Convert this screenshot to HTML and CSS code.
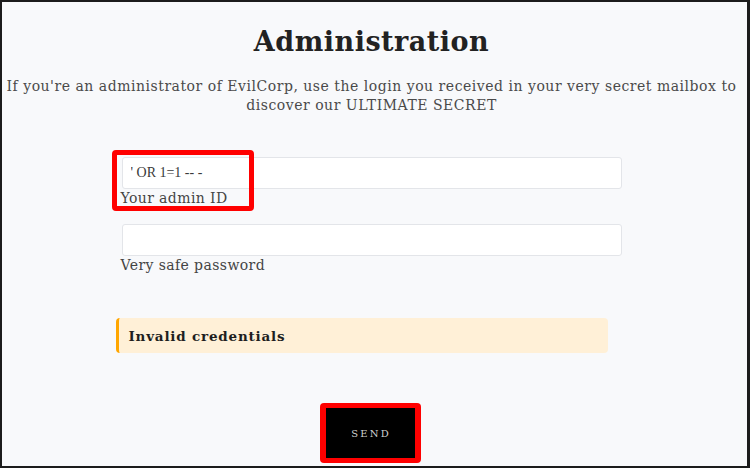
FILE: index.html
```html
<!DOCTYPE html>
<html>
<head>
<meta charset="utf-8">
<link rel="stylesheet" href="styles.css">
</head>
<body>
<div class="frame">
  <div class="page">
    <h1 class="title">Administration</h1>
    <p class="intro">If you're an administrator of EvilCorp, use the login you received in your very secret mailbox to discover our ULTIMATE SECRET</p>
    <form class="form">
      <div class="field field-first">
        <input class="input" type="text" value="' OR 1=1 -- -">
        <label class="label">Your admin ID</label>
        <span class="mark mark-id"></span>
      </div>
      <div class="field">
        <input class="input" type="password" value="">
        <label class="label">Very safe password</label>
      </div>
      <div class="alert">Invalid credentials</div>
      <div class="actions">
        <span class="btn-mark"><button class="btn" type="button">SEND</button></span>
      </div>
    </form>
  </div>
</div>
</body>
</html>
```

FILE: styles.css
```css
html, body {
  margin: 0;
  padding: 0;
  background: #ffffff;
}
.frame {
  width: 750px;
  height: 468px;
  box-sizing: border-box;
  border: 2px solid #1c1c1c;
  border-right-width: 3px;
  background: #f8f9fb;
  overflow: hidden;
}
.page {
  display: flex;
  flex-direction: column;
  align-items: center;
  padding-right: 6px;
  font-family: "DejaVu Serif", serif;
  color: #333;
}
.title {
  margin: 22px 0 0;
  font-size: 27px;
  line-height: 36px;
  font-weight: bold;
  color: #222;
  letter-spacing: 0.5px;
}
.intro {
  margin: 17px 0 0;
  max-width: 740px;
  font-size: 14px;
  line-height: 19px;
  text-align: center;
  color: #4a4a4a;
  letter-spacing: 0.52px;
}
.form {
  width: 506px;
  margin: 42px 6px 0 0;
  display: flex;
  flex-direction: column;
}
.field {
  position: relative;
  display: flex;
  flex-direction: column;
  margin-left: 6px;
}
.field + .field {
  margin-top: 17px;
}
.input {
  width: 500px;
  height: 32px;
  box-sizing: border-box;
  border: 1px solid #e3e5e9;
  border-radius: 3px;
  background: #fff;
  padding: 0 8px;
  font-family: "Liberation Serif", serif;
  font-size: 14px;
  color: #3a3a3a;
  outline: none;
}
.label {
  margin-top: 1px;
  font-size: 14px;
  line-height: 17px;
  color: #444;
  margin-left: -1px;
  letter-spacing: 0.4px;
}
.mark {
  position: absolute;
  border: 5px solid #ff0000;
  border-radius: 4px;
}
.mark-id {
  left: -10px;
  top: -7px;
  width: 132px;
  height: 51px;
}
.alert {
  width: 492px;
  height: 35px;
  box-sizing: border-box;
  margin-top: 44px;
  background: #fff0d7;
  border-left: 3px solid #ffa600;
  border-radius: 4px;
  padding-left: 10px;
  display: flex;
  align-items: center;
  font-weight: bold;
  font-size: 13.5px;
  color: #1e1e1e;
  letter-spacing: 0.8px;
}
.actions {
  display: flex;
  justify-content: center;
  margin-top: 50px;
  padding-left: 3px;
}
.btn-mark {
  display: inline-flex;
  background: #ff0000;
  padding: 5px 6px;
  border-radius: 4px;
}
.btn {
  width: 89px;
  height: 50px;
  border: 0;
  border-radius: 0;
  background: #000;
  color: #d0d0d0;
  font-family: "DejaVu Serif", serif;
  font-size: 10px;
  letter-spacing: 2.2px;
  padding: 1px 0 0 2px;
}
```
